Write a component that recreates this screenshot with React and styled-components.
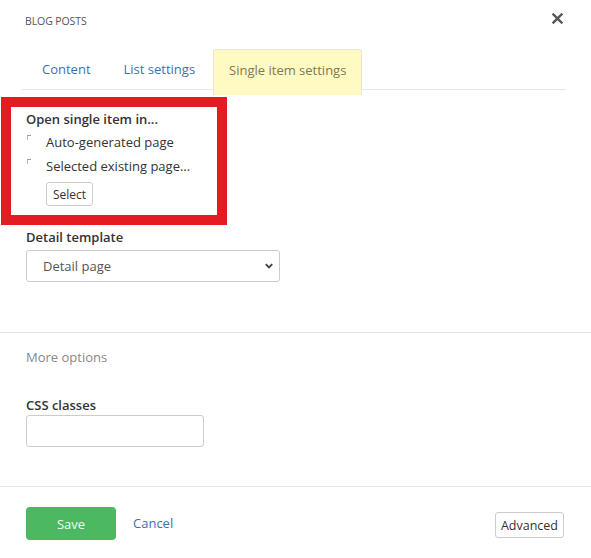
import React from "react";
import styled, { createGlobalStyle } from "styled-components";

const Global = createGlobalStyle`
  html, body { margin: 0; padding: 0; background: #fff; }
  body { font-family: "Open Sans", "Noto Sans", sans-serif; font-size: 13px; color: #333; }
  * { box-sizing: border-box; }
`;

const Page = styled.div`
  width: 591px;
  height: 558px;
  background: #fff;
  overflow: hidden;
`;

const Header = styled.div`
  display: flex;
  align-items: center;
  justify-content: space-between;
  height: 38px;
  padding: 2px 28px 0 25px;
`;

const Title = styled.div`
  font-size: 10.5px;
  color: #555;
  text-transform: uppercase;
  letter-spacing: -0.1px;
  margin-top: 1px;
`;

const Close = styled.span`
  display: flex;
  width: 11px;
  height: 11px;
  margin-top: -3px;
  align-items: center;
  justify-content: center;
`;

const TabBar = styled.div`
  display: flex;
  align-items: flex-start;
  margin: 11px 25px 0 22px;
  padding-left: 4px;
  height: 41px;
  border-bottom: 1px solid #e6e6e6;
`;

const Tab = styled.div`
  height: ${(p) => (p.$active ? "46px" : "40px")};
  padding: 0 ${(p) => (p.$active ? "15px" : "16px")};
  margin-right: ${(p) => (p.$gap ? "2px" : "1px")};
  line-height: 40px;
  font-size: 13px;
  color: ${(p) => (p.$active ? "#7d7a55" : "#3b71b5")};
  background: ${(p) => (p.$active ? "#fff9c2" : "transparent")};
  border: ${(p) => (p.$active ? "1px solid #e8e6cf" : "none")};
  border-bottom: none;
  border-radius: 3px 3px 0 0;
  position: relative;
  z-index: 1;
`;

const Highlight = styled.div`
  width: 226px;
  margin: 7px 0 0 1px;
  border: 10px solid #e51b24;
  padding: 2px 0 9px 15px;
`;

const Label = styled.div`
  font-weight: 600;
  font-size: 13px;
  line-height: ${(p) => p.$lh || "20px"};
  color: #333;
`;

const RadioRow = styled.div`
  display: flex;
  align-items: center;
  height: 24px;
  line-height: 20px;
  font-size: 13px;
  color: #333;
`;

const RadioMark = styled.span`
  width: 20px;
  height: 20px;
  position: relative;
  &::before {
    content: "";
    position: absolute;
    left: 1px;
    top: 3px;
    width: 3px;
    height: 4px;
    border-top: 1px solid #999;
    border-left: 1px solid #bbb;
  }
`;

const SmallButton = styled.button`
  margin: 4px 0 0 20px;
  height: 24px;
  padding: 0 6px;
  font-family: inherit;
  font-size: 12px;
  color: #333;
  background: #fff;
  border: 1px solid #ccc;
  border-radius: 3px;
`;

const Section = styled.div`
  padding: 0 0 0 26px;
  margin-top: ${(p) => p.$top || "0px"};
`;

const Field = styled.div`
  display: flex;
  flex-direction: column;
  gap: ${(p) => p.$gap || "3px"};
`;

const SelectBox = styled.div`
  width: 254px;
  height: 32px;
  display: flex;
  align-items: center;
  justify-content: space-between;
  padding: 0 5px 0 16px;
  border: 1px solid #ccc;
  border-radius: 3px;
  font-size: 13px;
  color: #555;
`;

const TextInput = styled.input`
  width: 178px;
  height: 32px;
  border: 1px solid #ccc;
  border-radius: 3px;
  font-family: inherit;
  font-size: 13px;
  padding: 0 8px;
`;

const Divider = styled.div`
  height: 1px;
  background: #e4e4e4;
  margin-top: ${(p) => p.$top};
`;

const MoreOptions = styled.div`
  padding: 14px 26px 0;
  font-size: 13px;
  line-height: 20px;
  color: #888;
`;

const Footer = styled.div`
  display: flex;
  align-items: flex-start;
  padding: 20px 27px 0 26px;
`;

const SaveButton = styled.button`
  width: 90px;
  height: 33px;
  border: none;
  border-radius: 4px;
  background: #4cb962;
  color: #f1fbf2;
  font-family: inherit;
  font-size: 13px;
`;

const CancelLink = styled.span`
  margin-left: 17px;
  line-height: 33px;
  color: #3b6fb0;
  font-size: 13px;
`;

const AdvancedButton = styled.button`
  margin: 5px 0 0 auto;
  height: 26px;
  padding: 0 5px;
  background: #fff;
  border: 1px solid #ccc;
  border-radius: 3px;
  font-family: inherit;
  font-size: 12.5px;
  color: #333;
`;

export default function App() {
  return (
    <Page>
      <Global />
      <Header>
        <Title>Blog posts</Title>
        <Close>
          <svg width="11" height="11" viewBox="0 0 11 11">
            <path d="M1.5 1.5 L9.5 9.5 M9.5 1.5 L1.5 9.5" stroke="#555" strokeWidth="2.4" strokeLinecap="square" />
          </svg>
        </Close>
      </Header>
      <TabBar>
        <Tab>Content</Tab>
        <Tab $gap>List settings</Tab>
        <Tab $active>Single item settings</Tab>
      </TabBar>
      <Highlight>
        <Label $lh="21px">Open single item in...</Label>
        <RadioRow>
          <RadioMark />
          Auto-generated page
        </RadioRow>
        <RadioRow>
          <RadioMark />
          Selected existing page...
        </RadioRow>
        <SmallButton>Select</SmallButton>
      </Highlight>
      <Section $top="2px">
        <Field>
          <Label>Detail template</Label>
          <SelectBox>
            Detail page
            <svg width="10" height="8" viewBox="0 0 10 8">
              <path d="M1.8 2.2 L5 5.4 L8.2 2.2" stroke="#444" strokeWidth="1.9" fill="none" />
            </svg>
          </SelectBox>
        </Field>
      </Section>
      <Divider $top="50px" />
      <MoreOptions>More options</MoreOptions>
      <Section $top="29px">
        <Field $gap="0px">
          <Label $lh="19px">CSS classes</Label>
          <TextInput />
        </Field>
      </Section>
      <Divider $top="39px" />
      <Footer>
        <SaveButton>Save</SaveButton>
        <CancelLink>Cancel</CancelLink>
        <AdvancedButton>Advanced</AdvancedButton>
      </Footer>
    </Page>
  );
}
